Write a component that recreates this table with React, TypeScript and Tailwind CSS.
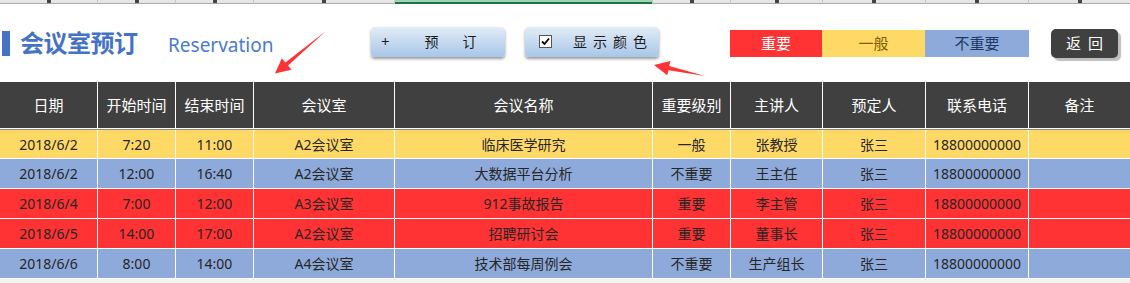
import React from 'react';

const COLS = 'grid-cols-[97px_77px_77px_140px_257px_77px_91px_102px_102px_101px]';

const HEADERS = ['日期', '开始时间', '结束时间', '会议室', '会议名称', '重要级别', '主讲人', '预定人', '联系电话', '备注'];

type Level = '重要' | '一般' | '不重要';

const LEVEL_BG: Record<Level, string> = {
  重要: 'bg-[#ff3333]',
  一般: 'bg-[#ffd966]',
  不重要: 'bg-[#8eaadb]',
};

const ROWS: { date: string; start: string; end: string; room: string; name: string; level: Level; speaker: string }[] = [
  { date: '2018/6/2', start: '7:20', end: '11:00', room: 'A2会议室', name: '临床医学研究', level: '一般', speaker: '张教授' },
  { date: '2018/6/2', start: '12:00', end: '16:40', room: 'A2会议室', name: '大数据平台分析', level: '不重要', speaker: '王主任' },
  { date: '2018/6/4', start: '7:00', end: '12:00', room: 'A3会议室', name: '912事故报告', level: '重要', speaker: '李主管' },
  { date: '2018/6/5', start: '14:00', end: '17:00', room: 'A2会议室', name: '招聘研讨会', level: '重要', speaker: '董事长' },
  { date: '2018/6/6', start: '8:00', end: '14:00', room: 'A4会议室', name: '技术部每周例会', level: '不重要', speaker: '生产组长' },
];

const STRIP = [97, 77, 77, 140, 257, 77, 91, 102, 102, 101];

function TopStrip() {
  return (
    <div className="flex h-[4px] gap-px bg-[#c6c6c6]">
      {STRIP.map((w, i) =>
        i === 4 ? (
          <div key={i} style={{ width: w }} className="flex flex-col">
            <div className="h-[2px] bg-[#9fd5b7]" />
            <div className="h-[2px] bg-[#217346]" />
          </div>
        ) : (
          <div key={i} style={{ width: w }} className="relative border-b border-[#ababab] bg-[#e6e6e6]">
            <span className="absolute left-1/2 top-0 h-[3px] w-[4px] -translate-x-1/2 bg-[#444]" />
          </div>
        )
      )}
    </div>
  );
}

function Arrows() {
  return (
    <svg className="pointer-events-none absolute left-0 top-0" width="1130" height="82">
      <polygon
        fill="#ff3333"
        points="326,27 288,61.5 291.5,65.8 275,69.5 281.8,54.2 285.4,58.5"
      />
      <polygon
        fill="#ff3333"
        points="705,72 668.6,66.3 667.2,71.2 654,61 670.4,57 669.2,62.1"
      />
    </svg>
  );
}

function BlueButton({ children }: { children: React.ReactNode }) {
  return (
    <div className="flex h-[30px] w-[134px] items-center rounded-[4px] bg-gradient-to-b from-[#e2ecf7] to-[#a8c6e8] text-[14px] text-[#1a1a1a] shadow-[0_2px_3px_rgba(0,0,0,0.4)]">
      {children}
    </div>
  );
}

export default function App() {
  return (
    <div className="w-[1130px] h-[283px] overflow-hidden bg-white font-['Noto_Sans','Noto_Sans_CJK_SC',sans-serif]">
      <TopStrip />
      <div className="relative flex h-[78px] items-center">
        <Arrows />
        <div className="flex w-[168px] items-center">
          <div className="ml-[2px] h-[25px] w-[8px] bg-[#4472c4]" />
          <span className="ml-[10px] text-[24px] font-bold leading-none tracking-[-0.5px] text-[#4472c4]">会议室预订</span>
        </div>
        <div className="w-[203px] pt-[4px] text-[19px] leading-none text-[#4a7bd0]">Reservation</div>
        <div className="-mt-[3px]">
          <BlueButton>
            <span className="ml-[10px] text-[15px]">+</span>
            <span className="ml-[35px]">预</span>
            <span className="ml-[24px]">订</span>
          </BlueButton>
        </div>
        <div className="-mt-[3px] ml-[20px]">
          <BlueButton>
            <span className="ml-[14px] flex h-[13px] w-[13px] items-center justify-center border border-[#555] bg-white">
              <svg width="9" height="9" viewBox="0 0 9 9">
                <path d="M1 4.5 L3.5 7 L8 1.5" stroke="#000" strokeWidth="1.8" fill="none" />
              </svg>
            </span>
            <span className="ml-[21px] tracking-[6px]">显示颜色</span>
          </BlueButton>
        </div>
        <div className="ml-[71px] flex h-[27px] text-[15px]">
          <div className="flex w-[92px] items-center justify-center bg-[#ff3333] text-white">重要</div>
          <div className="flex w-[103px] items-center justify-center bg-[#ffd966] text-[#7f6000]">一般</div>
          <div className="flex w-[104px] items-center justify-center bg-[#8eaadb] text-[#1f3864]">不重要</div>
        </div>
        <div className="ml-[22px] flex h-[29px] w-[67px] items-center justify-center rounded-[5px] bg-[#404040] text-[15px] tracking-[7px] pl-[7px] text-white shadow-[3px_3px_1px_#bfbfbf]">
          返回
        </div>
      </div>

      <div className={`grid h-[46px] ${COLS} gap-x-px bg-white`}>
        {HEADERS.map((h) => (
          <div key={h} className="flex items-center justify-center bg-[#404040] text-[15px] text-white">
            {h}
          </div>
        ))}
      </div>
      <div className="h-px bg-white" />
      <div className="h-px bg-[#8c8c8c]" />
      <div className="flex flex-col gap-px bg-white pb-px">
        {ROWS.map((r, i) => (
          <div key={i} className={`grid ${i === 0 ? 'h-[28px]' : 'h-[29px]'} ${COLS} gap-x-px bg-white`}>
            {[r.date, r.start, r.end, r.room, r.name, r.level, r.speaker, '张三', '18800000000', ''].map((c, j) => (
              <div
                key={j}
                className={`flex items-center justify-center ${LEVEL_BG[r.level]} text-[14px] text-[#262626]`}
              >
                {c}
              </div>
            ))}
          </div>
        ))}
      </div>
      <div className="h-[10px] bg-[#f2f2f2]" />
    </div>
  );
}
